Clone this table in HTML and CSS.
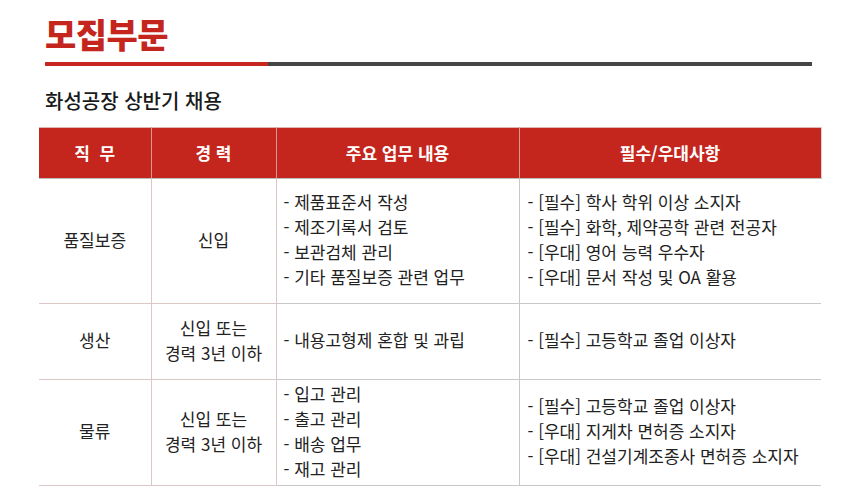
FILE: index.html
```html
<!DOCTYPE html>
<html lang="ko">
<head>
<meta charset="utf-8">
<title>모집부문</title>
<link rel="stylesheet" href="styles.css">
</head>
<body>
<main class="page">
  <h1 class="title">모집부문</h1>
  <div class="rule"><span class="rule-red"></span><span class="rule-dark"></span></div>
  <h2 class="subtitle">화성공장 상반기 채용</h2>
  <table class="jobs">
    <colgroup>
      <col class="c1"><col class="c2"><col class="c3"><col class="c4">
    </colgroup>
    <thead>
      <tr>
        <th class="soft">직&nbsp;&nbsp;무</th>
        <th class="soft">경 력</th>
        <th>주요 업무 내용</th>
        <th>필수/우대사항</th>
      </tr>
    </thead>
    <tbody>
      <tr class="r1">
        <td class="center soft">품질보증</td>
        <td class="center soft">신입</td>
        <td>- 제품표준서 작성<br>- 제조기록서 검토<br>- 보관검체 관리<br>- 기타 품질보증 관련 업무</td>
        <td>- [필수] 학사 학위 이상 소지자<br>- [필수] 화학, 제약공학 관련 전공자<br>- [우대] 영어 능력 우수자<br>- [우대] 문서 작성 및 OA 활용</td>
      </tr>
      <tr class="r2">
        <td class="center soft">생산</td>
        <td class="center soft">신입 또는<br>경력 3년 이하</td>
        <td>- 내용고형제 혼합 및 과립</td>
        <td>- [필수] 고등학교 졸업 이상자</td>
      </tr>
      <tr class="r3">
        <td class="center soft">물류</td>
        <td class="center soft">신입 또는<br>경력 3년 이하</td>
        <td>- 입고 관리<br>- 출고 관리<br>- 배송 업무<br>- 재고 관리</td>
        <td>- [필수] 고등학교 졸업 이상자<br>- [우대] 지게차 면허증 소지자<br>- [우대] 건설기계조종사 면허증 소지자</td>
      </tr>
    </tbody>
  </table>
</main>
</body>
</html>
```
FILE: styles.css
```css
* { box-sizing: border-box; }
html, body { margin: 0; padding: 0; background: #ffffff; }
body {
  font-family: "Noto Sans CJK KR", "Noto Sans", "Liberation Sans", sans-serif;
  color: #222222;
  width: 860px;
}
.page { padding: 12px 0 0 39px; }
.title {
  margin: 0 0 0 6px;
  font-size: 34px;
  line-height: 44px;
  font-weight: 900;
  color: #c4261e;
  letter-spacing: -0.5px;
}
.rule {
  display: flex;
  margin: 6px 0 0 6px;
  width: 767px;
  height: 4px;
}
.rule-red { width: 223px; background: #c7271f; }
.rule-dark { flex: 1; background: #454545; }
.subtitle {
  margin: 22px 0 0 6px;
  font-size: 20px;
  line-height: 26px;
  font-weight: 500;
  color: #1a1a1a;
}
.jobs {
  margin-top: 13px;
  width: 782px;
  border-collapse: collapse;
  table-layout: fixed;
  font-size: 17px;
  line-height: 25px;
}
.c1 { width: 112px; }
.c2 { width: 125px; }
.c3 { width: 243px; }
.c4 { width: 302px; }
.jobs th {
  height: 51px;
  background: #c4261e;
  color: #ffffff;
  font-size: 17px;
  font-weight: 700;
  text-align: center;
  border-top: 1px solid #e0b5b3;
  border-bottom: 1px solid #bdbdbd;
  border-right: 1px solid #d39a97;
  padding: 0 0 2px 0;
}
.jobs th:last-child { border-right: 1px solid #e6cfcd; }
.jobs td {
  vertical-align: middle;
  padding: 0 8px 4px 8px;
  border-bottom: 1px solid #c8c8c8;
  border-right: 1px solid #c8c8c8;
  color: #222222;
}
.jobs td:last-child { border-right: none; }
.jobs td.soft { border-color: #dcc7c7; }
.jobs td:nth-child(3) { padding-left: 7px; }
.center { text-align: center; }
.r1 td { height: 125px; }
.r2 td { height: 76px; }
.r3 td { height: 106px; }
```
